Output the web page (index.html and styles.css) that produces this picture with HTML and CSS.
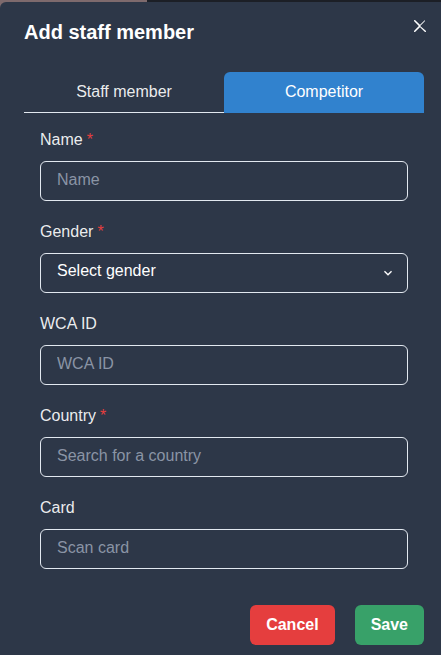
FILE: index.html
```html
<!DOCTYPE html>
<html lang="en">
<head>
<meta charset="utf-8">
<title>Add staff member</title>
<link rel="stylesheet" href="styles.css">
</head>
<body>
<div class="modal">
  <header class="modal-header">
    <h2 class="title">Add staff member</h2>
    <button class="close" aria-label="Close">
      <svg viewBox="0 0 24 24" width="12" height="12"><path fill="currentColor" d="M.439,21.44a1.5,1.5,0,0,0,2.122,2.121L11.823,14.3a.25.25,0,0,1,.354,0l9.262,9.263a1.5,1.5,0,1,0,2.122-2.121L12.3,12.177a.25.25,0,0,1,0-.354l9.263-9.262A1.5,1.5,0,0,0,21.439.44L12.177,9.7a.25.25,0,0,1-.354,0L2.561.44A1.5,1.5,0,0,0,.439,2.561L9.7,11.823a.25.25,0,0,1,0,.354Z"/></svg>
    </button>
  </header>
  <div class="modal-body">
    <div class="tabs">
      <div class="tab">Staff member</div>
      <div class="tab active">Competitor</div>
    </div>
    <form class="panel">
      <div class="field">
        <label class="label">Name<span class="req">*</span></label>
        <input class="input" type="text" placeholder="Name">
      </div>
      <div class="field">
        <label class="label">Gender<span class="req">*</span></label>
        <div class="select-wrap">
          <select class="input select"><option>Select gender</option></select>
          <svg class="chevron" viewBox="0 0 24 24" width="16" height="16"><path fill="currentColor" d="M16.59 8.59L12 13.17 7.41 8.59 6 10l6 6 6-6z"/></svg>
        </div>
      </div>
      <div class="field">
        <label class="label">WCA ID</label>
        <input class="input" type="text" placeholder="WCA ID">
      </div>
      <div class="field">
        <label class="label">Country<span class="req">*</span></label>
        <input class="input" type="text" placeholder="Search for a country">
      </div>
      <div class="field">
        <label class="label">Card</label>
        <input class="input" type="text" placeholder="Scan card">
      </div>
    </form>
  </div>
  <footer class="modal-footer">
    <button class="btn cancel">Cancel</button>
    <button class="btn save">Save</button>
  </footer>
</div>
</body>
</html>
```

FILE: styles.css
```css
html, body {
  margin: 0;
  padding: 0;
  height: 100%;
  overflow: hidden;
}
body {
  box-sizing: border-box;
  background: linear-gradient(to right, #7e6a6d 0, #7e6a6d 147px, #1c1f26 147px);
  font-family: "Liberation Sans", Arial, sans-serif;
  color: rgba(255, 255, 255, 0.92);
  padding-top: 2px;
}
.modal {
  width: 448px;
  height: 100%;
  background: #2d3748;
  border-radius: 6px 6px 0 0;
  position: relative;
}
.modal-header {
  padding: 15px 24px 16px;
}
.title {
  margin: 0;
  font-size: 20px;
  line-height: 30px;
  font-weight: 700;
  color: #fff;
}
.close {
  position: absolute;
  top: 8px;
  right: 12px;
  width: 32px;
  height: 32px;
  border: 0;
  background: transparent;
  color: #fff;
  display: flex;
  align-items: center;
  justify-content: center;
  padding: 0;
}
.modal-body {
  padding: 9px 24px 0;
}
.tabs {
  display: flex;
}
.tab {
  flex: 1;
  text-align: center;
  font-size: 16px;
  line-height: 24px;
  padding: 8px 0;
  border-bottom: 1px solid #e2e8f0;
  color: rgba(255, 255, 255, 0.92);
}
.tab.active {
  background: #3182ce;
  border-bottom-color: #3182ce;
  border-radius: 6px 6px 0 0;
  color: #fff;
}
.panel {
  padding: 16px 16px 16px;
  display: flex;
  flex-direction: column;
  gap: 20px;
}
.field {
  display: flex;
  flex-direction: column;
}
.label {
  font-size: 16px;
  line-height: 24px;
  margin-bottom: 8px;
  margin-top: -1px;
  padding-bottom: 1px;
  color: rgba(255, 255, 255, 0.92);
}
.req {
  color: #e53e3e;
  margin-left: 4px;
}
.input {
  box-sizing: border-box;
  width: 100%;
  height: 40px;
  border: 1px solid #e2e8f0;
  border-radius: 6px;
  background: transparent;
  padding: 0 16px 2px;
  font-family: "Liberation Sans", Arial, sans-serif;
  font-size: 16px;
  color: #fff;
  outline: none;
}
.input::placeholder {
  color: #8a94a5;
}
.select-wrap {
  position: relative;
}
.select {
  appearance: none;
  -webkit-appearance: none;
  color: #fff;
  padding-bottom: 5px;
}
.select option {
  background: #2d3748;
}
.chevron {
  position: absolute;
  right: 12px;
  top: 12px;
  color: #fff;
  pointer-events: none;
}
.modal-footer {
  display: flex;
  justify-content: flex-end;
  gap: 20px;
  padding: 20px 24px 8px;
}
.btn {
  height: 40px;
  padding: 0 16px;
  border: 0;
  border-radius: 6px;
  font-family: "Liberation Sans", Arial, sans-serif;
  font-size: 16px;
  font-weight: 700;
  color: #fff;
}
.btn.cancel {
  background: #e53e3e;
}
.btn.save {
  background: #38a169;
}
```
